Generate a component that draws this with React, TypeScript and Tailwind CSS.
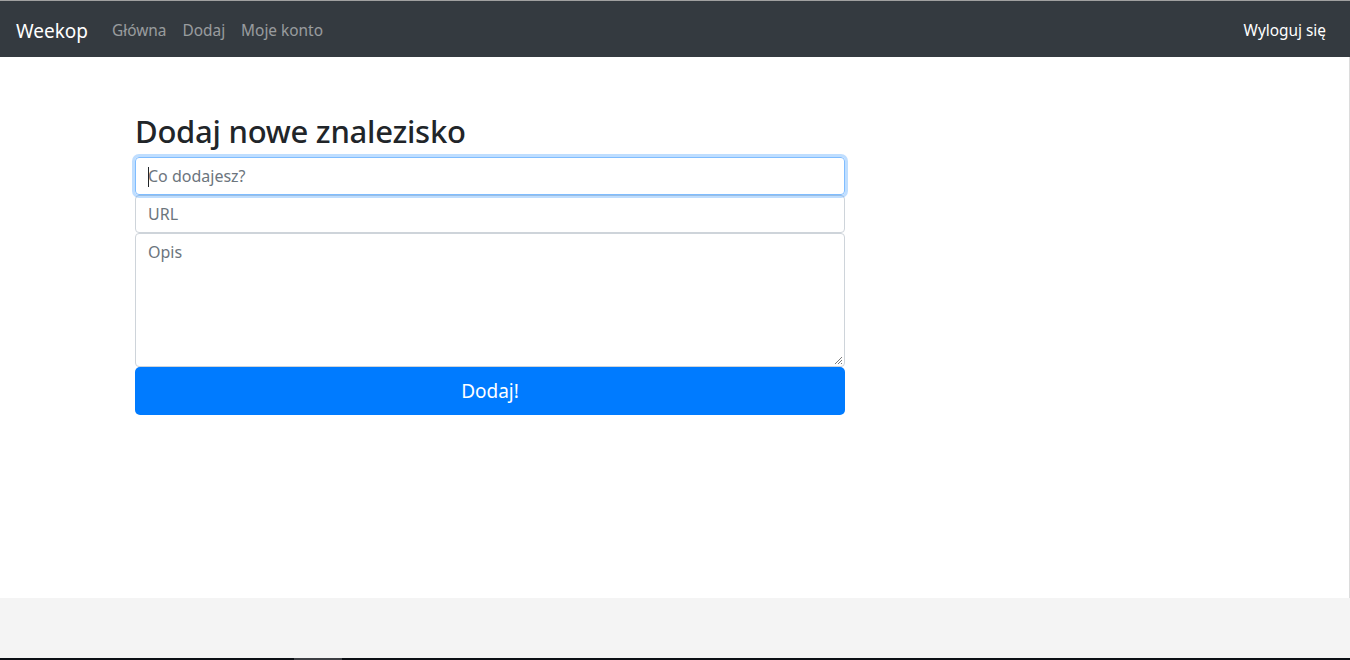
import React from "react";

export default function App() {
  const font = { fontFamily: '"Noto Sans", "Open Sans", "Liberation Sans", sans-serif' };
  return (
    <div className="w-[1350px] h-[660px] flex flex-col bg-white overflow-hidden" style={font}>
      <div className="h-px bg-[#a0a0a0]" />
      <nav className="h-[56px] bg-[#343a40] flex items-center px-4 pt-[4px]">
        <span className="text-white text-[19px] mr-4 leading-none">Weekop</span>
        <a className="text-[15.4px] text-white/50 px-2">Główna</a>
        <a className="text-[15.4px] text-white/50 px-2">Dodaj</a>
        <a className="text-[15.4px] text-white/50 px-2">Moje konto</a>
        <a className="ml-auto text-[15.4px] text-white px-2">Wyloguj się</a>
      </nav>
      <main className="flex-1 border-r border-[#dcdcdc] pt-[55px]">
        <div className="ml-[135px] w-[710px] flex flex-col">
          <h2 className="text-[31px] leading-[38px] tracking-[-0.25px] font-medium text-[#212529] mb-[7px]">Dodaj nowe znalezisko</h2>
          <div className="relative h-[38px] border border-[#80bdff] rounded-[4px] shadow-[0_0_0_3px_rgba(0,123,255,0.25)] flex items-center px-3 text-[16px] text-[#6c757d]">
            <span className="absolute left-[12px] top-[9px] w-px h-[20px] bg-[#212529]" />
            Co dodajesz?
          </div>
          <div className="h-[38px] border border-[#ced4da] rounded-[4px] flex items-center px-3 text-[16px] text-[#6c757d]">
            URL
          </div>
          <div className="relative h-[134px] border border-[#ced4da] rounded-[4px] px-3 pt-[6px] text-[16px] text-[#6c757d]">
            Opis
            <svg className="absolute right-[1px] bottom-[1px]" width="9" height="9" viewBox="0 0 9 9">
              <path d="M8 1 L1 8 M8 4 L4 8 M8 7 L7 8" stroke="#7a7a7a" strokeWidth="1" />
            </svg>
          </div>
          <button className="h-[48px] bg-[#007bff] text-white text-[19px] rounded-[5px] flex items-center justify-center">
            Dodaj!
          </button>
        </div>
      </main>
      <footer className="h-[60px] bg-[#f4f4f4]" />
      <div className="h-[2px] bg-[#0b0f14] flex">
        <div className="ml-[294px] w-[48px] bg-[#3d3f44]" />
      </div>
    </div>
  );
}
